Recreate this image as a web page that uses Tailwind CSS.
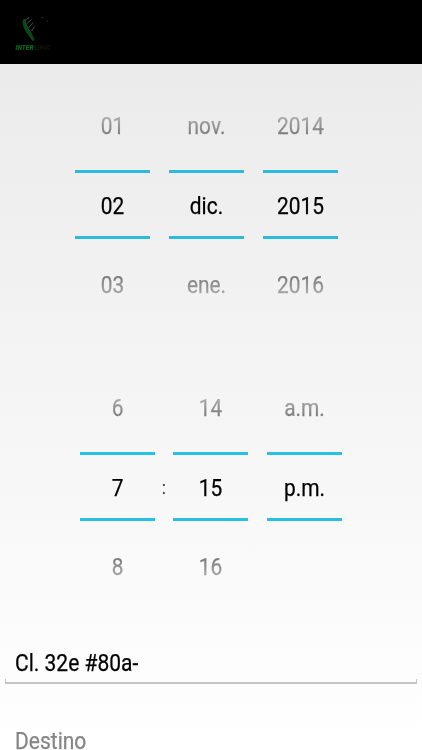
<!DOCTYPE html>
<html lang="es">
<head>
    <meta charset="UTF-8">
    <meta name="viewport" content="width=device-width, initial-scale=1.0">
    <title>Reserva</title>
    <script src="https://cdn.jsdelivr.net/npm/@tailwindcss/browser@4"></script>
</head>
<body class="h-[750px] overflow-hidden bg-black font-[Roboto,sans-serif] text-2xl text-black [-webkit-text-stroke-width:0.25px]">
    <header class="h-16 bg-black">
        <svg class="w-[60px] h-16" viewBox="0 0 60 64" fill="none">
            <path d="M23.500 19c-2 4 0 8 2 12l7 10 2-1-3-7c-3-4-5-8-6-14z" fill="#074a19"/>
            <path d="M25.500 20l4-2.500M26.500 24l5-4.500M28.500 28l4.500-5.500M31.500 31l3-4.500" stroke="#4a4a4a" stroke-width="1"/>
            <path d="M41 17l3 1M46 20l2 2" stroke="#222"/>
            <text x="15.500" y="49.500" font-family="Roboto, sans-serif" font-size="7" font-weight="700" font-style="italic" textLength="18" lengthAdjust="spacingAndGlyphs" fill="#087022">INTER</text>
            <text x="34" y="49.500" font-family="Roboto, sans-serif" font-size="7" font-weight="700" font-style="italic" textLength="17" lengthAdjust="spacingAndGlyphs" fill="#101511">SERVIC</text>
        </svg>
    </header>

    <main class="h-[686px] bg-linear-to-b from-[#ebebeb] via-[#f5f5f5] to-white overflow-hidden">
        <!-- Fecha -->
        <section class="flex gap-[18.75px] pl-[75px] pt-[22px] text-center">
            <div class="w-[75px]">
                <div class="h-[84px] leading-[81px] scale-x-[.87] text-transparent bg-clip-text bg-linear-to-b from-[#a8a8a8] from-38% to-[#7a7a7a] to-58%">01</div>
                <div class="h-[69px] border-y-[3px] border-[#2cbbdc] leading-[66px]"><div class="scale-x-[.87]">02</div></div>
                <div class="mt-[6px] h-[80px] leading-[81px] scale-x-[.87] text-transparent bg-clip-text bg-linear-to-b from-[#7a7a7a] from-40% to-[#a8a8a8] to-62%">03</div>
            </div>
            <div class="w-[75px]">
                <div class="h-[84px] leading-[81px] scale-x-[.87] text-transparent bg-clip-text bg-linear-to-b from-[#a8a8a8] from-38% to-[#7a7a7a] to-58%">nov.</div>
                <div class="h-[69px] border-y-[3px] border-[#2cbbdc] leading-[66px]"><div class="scale-x-[.87]">dic.</div></div>
                <div class="mt-[6px] h-[80px] leading-[81px] scale-x-[.87] text-transparent bg-clip-text bg-linear-to-b from-[#7a7a7a] from-40% to-[#a8a8a8] to-62%">ene.</div>
            </div>
            <div class="w-[75px]">
                <div class="h-[84px] leading-[81px] scale-x-[.87] text-transparent bg-clip-text bg-linear-to-b from-[#a8a8a8] from-38% to-[#7a7a7a] to-58%">2014</div>
                <div class="h-[69px] border-y-[3px] border-[#2cbbdc] leading-[66px]"><div class="scale-x-[.87]">2015</div></div>
                <div class="mt-[6px] h-[80px] leading-[81px] scale-x-[.87] text-transparent bg-clip-text bg-linear-to-b from-[#7a7a7a] from-40% to-[#a8a8a8] to-62%">2016</div>
            </div>
        </section>

        <!-- Hora -->
        <section class="flex pl-[80px] pt-[43px] text-center">
            <div class="w-[75px]">
                <div class="h-[84px] leading-[81px] scale-x-[.87] text-transparent bg-clip-text bg-linear-to-b from-[#a8a8a8] from-38% to-[#7a7a7a] to-58%">6</div>
                <div class="h-[69px] border-y-[3px] border-[#25c0e2] leading-[66px]"><div class="scale-x-[.87]">7</div></div>
                <div class="mt-[6px] h-[80px] leading-[81px] scale-x-[.87] text-transparent bg-clip-text bg-linear-to-b from-[#7a7a7a] from-40% to-[#a8a8a8] to-62%">8</div>
            </div>
            <div class="w-[18px] pt-[84px] text-lg leading-[72px] text-[#333]"><div class="scale-x-[.87]">:</div></div>
            <div class="w-[75px]">
                <div class="h-[84px] leading-[81px] scale-x-[.87] text-transparent bg-clip-text bg-linear-to-b from-[#a8a8a8] from-38% to-[#7a7a7a] to-58%">14</div>
                <div class="h-[69px] border-y-[3px] border-[#25c0e2] leading-[66px]"><div class="scale-x-[.87]">15</div></div>
                <div class="mt-[6px] h-[80px] leading-[81px] scale-x-[.87] text-transparent bg-clip-text bg-linear-to-b from-[#7a7a7a] from-40% to-[#a8a8a8] to-62%">16</div>
            </div>
            <div class="ml-[18.500px] w-[75px]">
                <div class="h-[84px] leading-[81px] scale-x-[.87] text-transparent bg-clip-text bg-linear-to-b from-[#a8a8a8] from-38% to-[#7a7a7a] to-58%">a.m.</div>
                <div class="h-[69px] border-y-[3px] border-[#25c0e2] leading-[66px]"><div class="scale-x-[.87]">p.m.</div></div>
            </div>
        </section>

        <!-- Direcciones -->
        <section class="px-[5px] pt-[37px]">
            <div class="h-[35px] pl-[9.500px] leading-[39px]"><div class="origin-left scale-x-[.875]">Cl. 32e #80a-</div></div>
            <div class="h-[5px] border-x border-b-2 border-[#c4c4c4]"></div>
            <div class="mt-[42px] pl-[9.500px] leading-[30px] text-[#858585]"><div class="origin-left scale-x-[.875]">Destino</div></div>
        </section>
    </main>
</body>
</html>
